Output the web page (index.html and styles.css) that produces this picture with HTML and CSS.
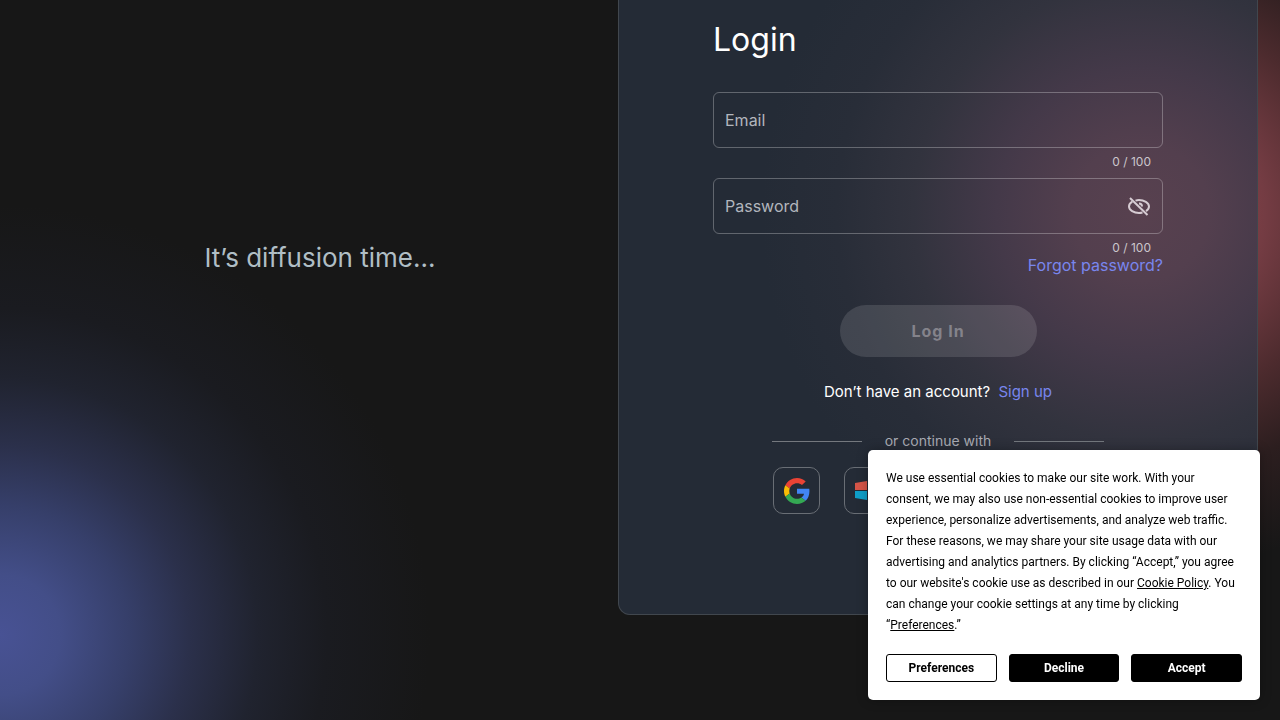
FILE: index.html
```html
<!DOCTYPE html>
<html lang="en">
<head>
    <meta charset="UTF-8">
    <meta name="viewport" content="width=device-width, initial-scale=1.0">
    <title>Login</title>
    <link rel="stylesheet" href="styles.css">
</head>
<body>

    <main class="page">
        <section class="intro">
            <p class="tagline">It’s diffusion time...</p>
        </section>

        <section class="card">
            <form class="login" id="loginForm">
                <h1>Login</h1>

                <div class="field">
                    <div class="field-box">
                        <input type="email" id="email" name="email" maxlength="100" placeholder="Email" aria-label="Email">
                    </div>
                    <div class="counter">0 / 100</div>
                </div>

                <div class="field">
                    <div class="field-box">
                        <input type="password" id="password" name="password" maxlength="100" placeholder="Password" aria-label="Password">
                        <button type="button" class="toggle" aria-label="Show password">
                            <svg width="24" height="24" viewBox="0 0 24 24" fill="none" stroke="currentColor" stroke-width="2">
                                <path d="M8.5 6.6C9.6 6.2 10.8 6 12 6c5 0 10 3 10 6.5 0 1.8-1.2 3.4-3 4.600M15.500 18.500c-1.100.3-2.300.5-3.500.5-5 0-10-3-10-6.500 0-2 1.300-3.700 3.300-4.900"/>
                                <path d="M12 9.500c1.800 0 3 1.200 3 3"/>
                                <path d="M3 4l17.500 17"/>
                            </svg>
                        </button>
                    </div>
                    <div class="counter">0 / 100</div>
                </div>

                <a href="#forgot" class="forgot">Forgot password?</a>

                <button type="submit" class="submit" disabled>Log In</button>

                <p class="signup">Don’t have an account? <a href="#signup">Sign up</a></p>

                <div class="alternatives">
                    <div class="divider"><span>or continue with</span></div>
                    <div class="socials">
                        <button type="button" class="social" aria-label="Continue with Google">
                            <svg width="26" height="26" viewBox="0 0 48 48">
                                <path fill="#ea4335" d="M24 9.500c3.540 0 6.710 1.220 9.210 3.600l6.850-6.850C35.900 2.380 30.470 0 24 0 14.620 0 6.510 5.380 2.560 13.220l7.980 6.190C12.430 13.720 17.740 9.500 24 9.500z"/>
                                <path fill="#4285f4" d="M46.980 24.550c0-1.570-.15-3.090-.38-4.550H24v9.020h12.940c-.58 2.960-2.260 5.480-4.780 7.180l7.730 6c4.510-4.180 7.090-10.360 7.090-17.650z"/>
                                <path fill="#fbbc05" d="M10.530 28.590c-.48-1.450-.76-2.990-.76-4.590s.27-3.140.76-4.590l-7.980-6.190C.92 16.460 0 20.120 0 24s.92 7.540 2.560 10.780l7.970-6.190z"/>
                                <path fill="#34a853" d="M24 48c6.480 0 11.930-2.130 15.890-5.810l-7.730-6c-2.150 1.450-4.920 2.300-8.160 2.300-6.260 0-11.570-4.220-13.470-9.910l-7.980 6.190C6.510 42.620 14.620 48 24 48z"/>
                            </svg>
                        </button>
                        <button type="button" class="social" aria-label="Continue with Microsoft">
                            <svg width="26" height="24" viewBox="0 0 26 24">
                                <path fill="#d65548" d="M0 4l12-2v9H0z"/>
                                <path fill="#8cbd18" d="M13 2l13-2v11H13z"/>
                                <path fill="#0f9fc9" d="M0 12h12v9L0 19z"/>
                                <path fill="#f6b900" d="M13 12h13v11l-13-2z"/>
                            </svg>
                        </button>
                    </div>
                </div>
            </form>
        </section>
    </main>

    <div class="cookies" role="dialog" aria-label="Cookie consent">
        <p>We use essential cookies to make our site work. With your consent, we may also use non-essential cookies to improve user experience, personalize advertisements, and analyze web traffic. For these reasons, we may share your site usage data with our advertising and analytics partners. By clicking “Accept,” you agree to our website's cookie use as described in our <a href="#policy">Cookie Policy</a>. You can change your cookie settings at any time by clicking “<a href="#preferences">Preferences</a>.”</p>
        <div class="cookie-actions">
            <button type="button" class="outline">Preferences</button>
            <button type="button">Decline</button>
            <button type="button">Accept</button>
        </div>
    </div>

</body>
</html>
```
FILE: styles.css
```css
* {
    box-sizing: border-box;
}
body {
    margin: 0;
    min-height: 100vh;
    font-family: Inter, "Liberation Sans", sans-serif;
    font-size: 15px;
    color: #fff;
    background-color: #171717;
    background-image:
        radial-gradient(circle 430px at 0 635px, #485294 0%, #434e88 14%, #363f6a 30%, #2b304b 44%, #20232f 60%, #1a1b20 76%, rgba(23, 23, 23, 0) 100%),
        radial-gradient(circle 360px at 1150px 212px, #a34a50 0%, #743c43 32%, #4d2b2e 54%, #2c1e1f 74%, rgba(23, 23, 23, 0) 100%);
    background-repeat: no-repeat;
}
h1,
p {
    margin: 0;
    font-weight: 400;
}
button,
input {
    font: inherit;
}
button {
    cursor: pointer;
}
.page {
    display: flex;
    padding: 0 22px;
}
.intro {
    flex: 1;
    padding-top: 240px;
    text-align: center;
}
.tagline {
    font-size: 26px;
    line-height: 36px;
    color: #b0bec5;
}

/* Login card */
.card {
    width: 640px;
    padding: 20px 24px 100px;
    border: 1px solid #41474e;
    border-top: 0;
    border-radius: 0 0 12px 12px;
    background-color: #242b36;
    background-image: radial-gradient(circle 380px at 522px 212px, #58414f 0%, #533f4e 18%, #443949 38%, #32333e 60%, #282d38 80%, #242b36 100%);
}
.login {
    display: flex;
    flex-direction: column;
    max-width: 450px;
    margin: 0 auto;
}
h1 {
    margin-bottom: 32px;
    font-size: 32px;
    line-height: 40px;
}
.field + .field {
    margin-top: 7px;
}
.field-box {
    display: flex;
    align-items: center;
    height: 56px;
    padding: 0 11px;
    border: 1px solid rgba(255, 255, 255, 0.28);
    border-radius: 6px;
}
.field-box input {
    flex: 1;
    min-width: 0;
    height: 100%;
    padding: 0;
    border: 0;
    outline: 0;
    font-size: 16px;
    color: #fff;
    background: none;
}
.field-box input::placeholder {
    color: #b2b6bd;
    opacity: 1;
}
.toggle {
    display: flex;
    padding: 0;
    border: 0;
    color: #d6ccd3;
    background: none;
}
.counter {
    padding: 5px 12px 0;
    font-size: 12px;
    line-height: 18px;
    text-align: right;
    color: #cbc6cc;
}
a {
    color: #7986ee;
    text-decoration: none;
}
.forgot {
    align-self: flex-end;
    font-size: 16px;
    line-height: 16px;
}
.submit {
    align-self: center;
    width: 197px;
    height: 52px;
    margin-top: 32px;
    border: 0;
    border-radius: 26px;
    font-size: 16px;
    font-weight: 700;
    letter-spacing: 1px;
    color: #84838b;
    background-color: rgba(255, 255, 255, 0.12);
}
.signup {
    margin-top: 25px;
    line-height: 20px;
    text-align: center;
}
.signup a {
    margin-left: 4px;
}
.alternatives {
    width: 332px;
    margin: 29px auto 0;
}
.divider {
    display: flex;
    align-items: center;
    justify-content: space-between;
    font-size: 14px;
    line-height: 20px;
    color: #a9abb3;
}
.divider::before,
.divider::after {
    content: "";
    width: 90px;
    height: 1px;
    background-color: #74787e;
}
.socials {
    display: flex;
    gap: 24px;
    margin-top: 16px;
    padding-left: 1px;
}
.social {
    display: flex;
    align-items: center;
    justify-content: center;
    width: 47px;
    height: 47px;
    padding: 0;
    border: 1px solid #696e75;
    border-radius: 10px;
    background: none;
}

/* Cookie banner */
.cookies {
    position: fixed;
    right: 20px;
    bottom: 20px;
    width: 392px;
    padding: 18px;
    border-radius: 5px;
    font-family: Roboto, "Liberation Sans", sans-serif;
    font-size: 12px;
    line-height: 21px;
    color: #000;
    background-color: #fff;
    box-shadow: 0 0 12px rgba(0, 0, 0, 0.3);
}
.cookies a {
    color: #000;
    text-decoration: underline;
}
.cookie-actions {
    display: flex;
    gap: 12px;
    margin-top: 18px;
}
.cookie-actions button {
    flex: 1;
    height: 28px;
    padding: 0;
    border: 1px solid #000;
    border-radius: 3px;
    font-weight: 700;
    color: #fff;
    background-color: #000;
}
.cookie-actions .outline {
    color: #000;
    background-color: #fff;
}
```
